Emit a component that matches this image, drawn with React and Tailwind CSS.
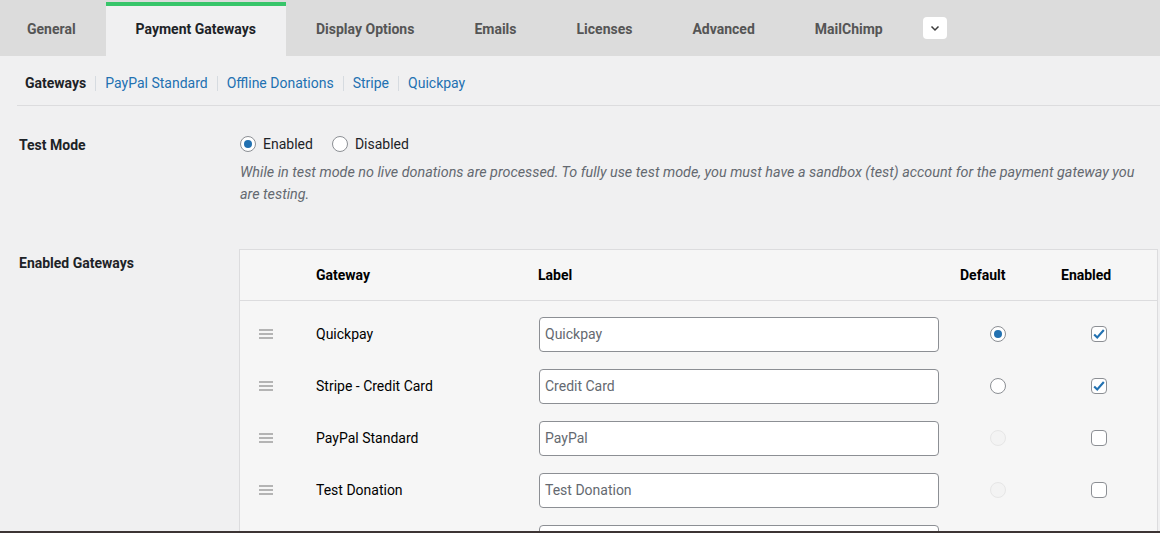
import { useState } from 'react';

const tabs = ['General', 'Payment Gateways', 'Display Options', 'Emails', 'Licenses', 'Advanced', 'MailChimp'];
const subLinks = ['PayPal Standard', 'Offline Donations', 'Stripe', 'Quickpay'];

// last row is only partly in view, so it carries no text
const gateways = [
  { id: 'quickpay', name: 'Quickpay', label: 'Quickpay', def: 'checked', enabled: true },
  { id: 'stripe', name: 'Stripe - Credit Card', label: 'Credit Card', def: 'open', enabled: true },
  { id: 'paypal', name: 'PayPal Standard', label: 'PayPal', def: 'disabled', enabled: false },
  { id: 'manual', name: 'Test Donation', label: 'Test Donation', def: 'disabled', enabled: false },
  { id: 'offline', name: '', label: '', def: 'disabled', enabled: false },
];

function Radio({ state }) {
  if (state === 'disabled') {
    return <span className="block h-4 w-4 rounded-full border border-[#e6e6e6] bg-[#f3f3f3]" />;
  }
  return (
    <span className="flex h-4 w-4 items-center justify-center rounded-full border border-[#8c8f94] bg-white">
      {state === 'checked' && <span className="h-2 w-2 rounded-full bg-[#2271b1]" />}
    </span>
  );
}

function Checkbox({ checked }) {
  return (
    <span className="flex h-4 w-4 items-center justify-center rounded-[4px] border border-[#8c8f94] bg-white">
      {checked && (
        <svg viewBox="0 0 16 16" className="h-[14px] w-[14px]">
          <path d="M2.5 8.5l3.5 3.5 7.5-8.5" fill="none" stroke="#2271b1" strokeWidth="2.4" />
        </svg>
      )}
    </span>
  );
}

function Handle() {
  return (
    <span className="flex w-[14px] flex-col gap-[2px]">
      <span className="h-[2px] bg-[#b4b4b4]" />
      <span className="h-[2px] bg-[#b4b4b4]" />
      <span className="h-[2px] bg-[#b4b4b4]" />
    </span>
  );
}

export default function App() {
  const [rows] = useState(gateways);

  return (
    <div className="flex h-[533px] flex-col overflow-hidden bg-[#f0f0f1] text-[14px] text-[#1d2327]" style={{ fontFamily: 'Roboto, "Liberation Sans", sans-serif' }}>
      <div className="flex-1 overflow-hidden">
        {/* tabs */}
        <div className="flex h-[56px] items-stretch bg-[#dcdcdc]">
          {tabs.map((t, i) => (
            <div
              key={t}
              className={
                t === 'Payment Gateways'
                  ? 'mt-[2px] flex items-center border-t-4 border-[#38c56a] bg-[#f0f0f1] px-[30px] pb-[4px] text-[14px] font-bold text-[#1d2327]'
                  : `mt-[2px] flex items-center border-t-4 border-transparent pb-[4px] ${i === 0 ? 'pl-[27px] pr-[30px]' : 'px-[30px]'} text-[14px] font-bold text-[#555555]`
              }
            >
              {t}
            </div>
          ))}
          <div className="ml-[10px] flex items-center pb-[1px]">
            <span className="flex h-[22px] w-[24px] items-center justify-center rounded-[4px] bg-white">
              <svg viewBox="0 0 12 12" className="h-[12px] w-[12px]">
                <path d="M2.5 4.5L6 8l3.5-3.5" fill="none" stroke="#3c3c3c" strokeWidth="1.5" />
              </svg>
            </span>
          </div>
        </div>

        {/* sub nav */}
        <div className="ml-[17px] flex h-[50px] items-center border-b border-[#dcdcde] pl-[8px] pt-[5px]">
          <span className="font-bold text-[#1d2327]">Gateways</span>
          {subLinks.map((l) => (
            <span key={l} className="flex items-center">
              <span className="mx-[9px] h-[15px] w-px bg-[#d6dbe0]" />
              <span className="text-[#2271b1]">{l}</span>
            </span>
          ))}
        </div>

        {/* test mode */}
        <div className="mt-[28px] flex">
          <div className="w-[240px] shrink-0 pl-[19px] pt-[1px] font-bold">Test Mode</div>
          <div className="flex-1 pr-[18px]">
            <div className="flex h-[20px] items-center">
              <Radio state="checked" />
              <span className="ml-[7px]">Enabled</span>
              <span className="ml-[19px]"><Radio state="open" /></span>
              <span className="ml-[7px]">Disabled</span>
            </div>
            <p className="mt-[8px] text-[14.35px] leading-[22px] italic text-[#646970]">
              While in test mode no live donations are processed. To fully use test mode, you must have a sandbox (test) account for the payment gateway you are testing.
            </p>
          </div>
        </div>

        {/* enabled gateways */}
        <div className="mt-[43px] flex">
          <div className="w-[239px] shrink-0 pl-[19px] pt-[4px] font-bold">Enabled Gateways</div>
          <div className="mr-[2px] flex-1 border border-[#dcdcde] bg-[#f6f6f6]">
            <div className="grid h-[51px] grid-cols-[76px_222px_422px_101px_1fr] items-center border-b border-[#dcdcde] pt-[1px] font-bold text-black">
              <span />
              <span>Gateway</span>
              <span>Label</span>
              <span>Default</span>
              <span>Enabled</span>
            </div>
            <div className="pt-[7px]">
              {rows.map((r) => (
                <div key={r.id} className="grid h-[52px] grid-cols-[76px_223px_421px_101px_1fr] items-center">
                  <span className="pl-[19px]"><Handle /></span>
                  <span className="text-black">{r.name}</span>
                  <span>
                    <span className="flex h-[35px] w-[400px] items-center rounded-[4px] border border-[#8c8f94] bg-white pl-[5px] text-[#646970]">
                      {r.label}
                    </span>
                  </span>
                  <span className="pl-[30px]"><Radio state={r.def} /></span>
                  <span className="pl-[30px]"><Checkbox checked={r.enabled} /></span>
                </div>
              ))}
            </div>
          </div>
        </div>
      </div>
      <div className="h-[2px] shrink-0 bg-[#3c3434]" />
    </div>
  );
}
